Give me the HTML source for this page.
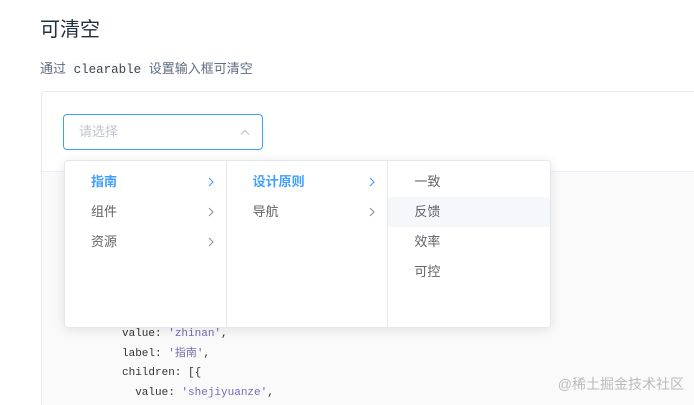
<!DOCTYPE html>
<html><head><meta charset="utf-8"><style>
*{margin:0;padding:0;box-sizing:border-box}
html,body{width:694px;height:405px;overflow:hidden}
body{background:#fff;font-family:"Liberation Sans","Noto Sans CJK SC",sans-serif;position:relative;color:#606266}
.a{position:absolute}
h3{position:absolute;left:40px;top:17px;font-size:20px;font-weight:400;color:#1f2f3d;line-height:26px}
.desc{left:40px;top:60px;font-size:13px;color:#5e6d82;line-height:18px}
code{font-family:"Liberation Mono",monospace;background:#fafbfc;padding:0 4px;font-size:12.5px;color:#444}
.box{left:41px;top:91px;width:700px;height:320px;border:1px solid #ebebeb;border-bottom:none;border-radius:3px}
.grey{left:42px;top:171px;width:700px;height:240px;background:#fafafa;border-top:1px solid #eaeefb}
.inp{left:63px;top:114px;width:200px;height:36px;border:1px solid #409eff;border-radius:4px;font-size:13px;color:#c0c4cc;padding-left:15px;line-height:34px}
.menu{left:64px;top:160px;width:487px;height:168px;background:#fff;border:1px solid #e4e7ed;border-radius:4px;box-shadow:0 2px 12px rgba(0,0,0,.1);display:flex;overflow:hidden}
.col{width:162px;border-right:1px solid #e4e7ed;padding-top:6px}
.col:last-child{border-right:none}
.it{height:30px;line-height:30px;font-size:13px;padding-left:26px;position:relative;color:#606266}
.it.on{color:#409eff;font-weight:700}
.it.hv{background:#f5f7fa}
.it svg{position:absolute;right:12px;top:10px}
.code{font-family:"Liberation Mono","Noto Sans CJK SC",monospace;font-size:11px;color:#333;line-height:19.5px;left:122px;top:325px}
.s{color:#756bb1}
.wm{right:10px;top:374px;font-size:14px;color:#bbb}
</style></head><body>
<h3>可清空</h3>
<div class="a desc">通过 <code>clearable</code> 设置输入框可清空</div>
<div class="a box"></div>
<div class="a grey"></div>
<div class="a inp">请选择<svg class="a" style="right:12px;top:14px" width="10" height="6" viewBox="0 0 10 6"><path d="M1 5.5L5 1.5L9 5.5" fill="none" stroke="#c0c4cc" stroke-width="1.2"/></svg></div>
<div class="a code"><div>value: <span class="s">'zhinan'</span>,</div><div>label: <span class="s">'指南'</span>,</div><div>children: [{</div><div>&nbsp;&nbsp;value: <span class="s">'shejiyuanze'</span>,</div></div>
<div class="a menu">
<div class="col">
<div class="it on">指南<svg width="6" height="10" viewBox="0 0 6 10"><path d="M1 1L5 5L1 9" fill="none" stroke="#409eff" stroke-width="1.1"/></svg></div>
<div class="it">组件<svg width="6" height="10" viewBox="0 0 6 10"><path d="M1 1L5 5L1 9" fill="none" stroke="#909399" stroke-width="1.1"/></svg></div>
<div class="it">资源<svg width="6" height="10" viewBox="0 0 6 10"><path d="M1 1L5 5L1 9" fill="none" stroke="#909399" stroke-width="1.1"/></svg></div>
</div>
<div class="col">
<div class="it on">设计原则<svg width="6" height="10" viewBox="0 0 6 10"><path d="M1 1L5 5L1 9" fill="none" stroke="#409eff" stroke-width="1.1"/></svg></div>
<div class="it">导航<svg width="6" height="10" viewBox="0 0 6 10"><path d="M1 1L5 5L1 9" fill="none" stroke="#909399" stroke-width="1.1"/></svg></div>
</div>
<div class="col">
<div class="it">一致</div>
<div class="it hv">反馈</div>
<div class="it">效率</div>
<div class="it">可控</div>
</div>
</div>
<div class="a wm">@稀土掘金技术社区</div>
</body></html>
